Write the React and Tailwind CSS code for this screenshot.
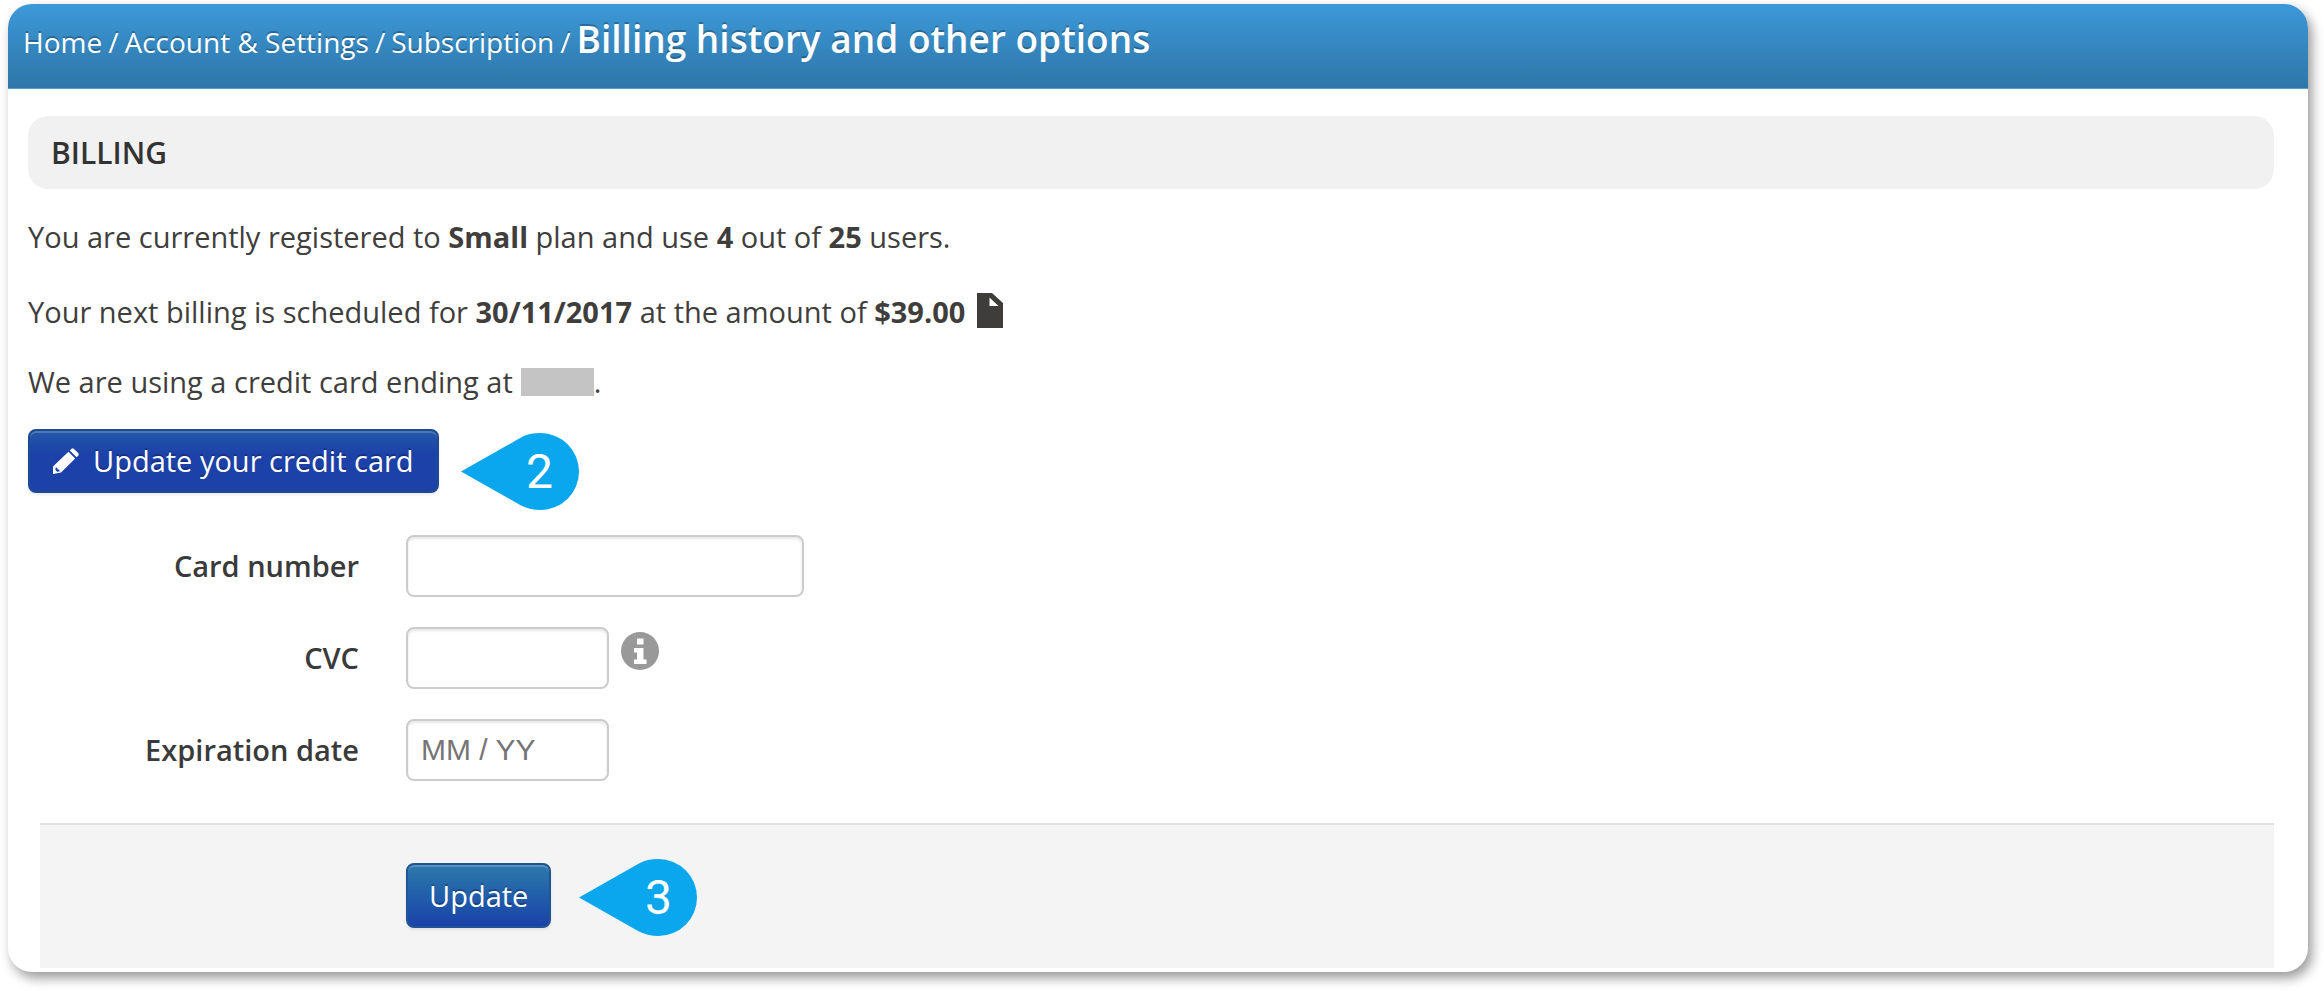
import React from "react";

const inputClass =
  "h-[62px] rounded-lg border-2 border-[#cccccc] bg-white px-[13px] font-['Liberation_Sans',Arial,sans-serif] text-[30px] text-[#555555] shadow-[inset_0_2px_3px_rgba(0,0,0,0.1)] placeholder:text-[#757575]";
const labelClass = "w-[319px] text-right font-semibold text-[#3a3a3a]";
const buttonClass =
  "flex items-center rounded-lg border-2 text-white [text-shadow:0_-2px_0_rgba(0,0,0,0.25)] shadow-[inset_0_2px_0_rgba(255,255,255,0.2),0_2px_3px_rgba(0,0,0,0.08)]";

function Marker({ number }) {
  return (
    <span className="relative block h-[77px] w-[118px]">
      <svg viewBox="0 0 118 77" className="block h-full w-full" aria-hidden="true">
        <path
          fill="#0aa6ee"
          d="M0 38.5 L59.5 4.8 C65.5 1.2 72 0 79.5 0 A38.5 38.5 0 0 1 79.5 77 C72 77 65.5 75.4 59.5 72.2 Z"
        />
      </svg>
      <span className="absolute inset-y-0 left-[61px] flex w-9 items-center justify-center font-[Roboto,sans-serif] text-5xl leading-none text-white">
        {number}
      </span>
    </span>
  );
}

function FileIcon() {
  return (
    <svg viewBox="0 0 26 35" className="mb-1 ml-3 inline-block h-[35px] w-[26px]" aria-hidden="true">
      <path fill="#3f3d3a" fillRule="evenodd" d="M0 0H15L26 10V35H0ZM12.5 4.5V13H21.5Z" />
    </svg>
  );
}

function PencilIcon() {
  return (
    <svg viewBox="0 0 26 26" className="h-[26px] w-[26px]" aria-hidden="true">
      <path fill="#ffffff" d="M16.8 2.4 18.6.8Q19.8-.2 21 .9L25.2 5Q26.3 6.2 25.3 7.4L23.6 9.2Z" />
      <path fill="#ffffff" fillRule="evenodd" d="M15.4 3.8 22.2 10.6 8 24.6 0 26V18.6ZM2.6 19.6 2.4 22 4.2 23.8 6.6 23.4 6.2 21.6 4.6 21.4 4.4 19.8Z" />
    </svg>
  );
}

function InfoIcon() {
  return (
    <svg viewBox="0 0 38 38" className="h-[38px] w-[38px]" aria-hidden="true">
      <circle cx="19" cy="19" r="19" fill="#999999" />
      <path fill="#ffffff" d="M16 6.5H22.5V12.5H16ZM13 16H22.5V27.5H25.5V32H13V27.5H16V20.5H13Z" />
    </svg>
  );
}

export default function App() {
  return (
    <div className="bg-white pt-1 pr-4 pb-5 pl-2 font-['Open_Sans','Noto_Sans',sans-serif] text-[29px] leading-10 text-[#403e3c]">
      <main className="overflow-hidden rounded-3xl bg-white pb-1 shadow-[4px_6px_12px_rgba(0,0,0,0.4)]">
        <header className="h-[85px] border-b border-[#5d9cc4] bg-linear-to-b from-[#3c99d8] to-[#2e76a8] px-[15px] pt-[11px] text-white [text-shadow:0_-2px_0_rgba(0,0,0,0.25)]">
          <nav aria-label="Breadcrumb" className="flex items-baseline gap-1.5 text-[28px] leading-[48px]">
            <a href="#home">Home</a>
            <span>/</span>
            <a href="#account">Account &amp; Settings</a>
            <span>/</span>
            <a href="#subscription">Subscription</a>
            <span>/</span>
            <h1 className="text-[37px] leading-[48px] font-semibold">Billing history and other options</h1>
          </nav>
        </header>

        <div className="pt-[27px] pr-[34px] pl-5">
          <h2 className="rounded-[20px] bg-[#f1f1f1] px-[23px] py-4 text-[30px] leading-[41px] font-semibold text-[#333333]">
            BILLING
          </h2>

          <p className="mt-7">
            You are currently registered to <b>Small</b> plan and use <b>4</b> out of <b>25</b> users.
          </p>
          <p className="mt-[35px] flex items-end">
            <span>
              Your next billing is scheduled for <b>30/11/2017</b> at the amount of <b>$39.00</b>
            </span>
            <FileIcon />
          </p>
          <p className="mt-[30px] flex items-center">
            We are using a credit card ending at
            <span className="ml-2 h-7 w-[73px] bg-[#c4c4c4]" />.
          </p>

          <div className="mt-[27px] flex items-start gap-[22px]">
            <button
              type="button"
              className={buttonClass + " h-16 gap-[14px] border-[#1d4a90] bg-linear-to-b from-[#2457a8] to-[#1c41a8] to-40% px-[23px]"}
            >
              <PencilIcon />
              Update your credit card
            </button>
            <div className="mt-1">
              <Marker number="2" />
            </div>
          </div>

          <form>
            <div className="mt-[25px] flex flex-col gap-[30px] pl-3">
              <div className="flex items-center gap-[47px]">
                <label htmlFor="card" className={labelClass}>Card number</label>
                <input id="card" type="text" className={inputClass + " w-[398px]"} />
              </div>
              <div className="flex items-center gap-[47px]">
                <label htmlFor="cvc" className={labelClass}>CVC</label>
                <div className="flex items-start gap-3">
                  <input id="cvc" type="text" className={inputClass + " w-[203px]"} />
                  <span className="mt-[5px]">
                    <InfoIcon />
                  </span>
                </div>
              </div>
              <div className="flex items-center gap-[47px]">
                <label htmlFor="expiry" className={labelClass}>Expiration date</label>
                <input id="expiry" type="text" placeholder="MM / YY" className={inputClass + " w-[203px]"} />
              </div>
            </div>

            <div className="mt-[42px] ml-3 flex items-start gap-7 border-t-2 border-[#e2e2e2] bg-[#f4f4f4] pt-[34px] pb-8 pl-[366px]">
              <button
                type="button"
                className={buttonClass + " mt-1 h-[65px] border-[#1f5595] bg-linear-to-b from-[#2e79ab] to-[#1c41a8] px-[21px]"}
              >
                Update
              </button>
              <Marker number="3" />
            </div>
          </form>
        </div>
      </main>
    </div>
  );
}
